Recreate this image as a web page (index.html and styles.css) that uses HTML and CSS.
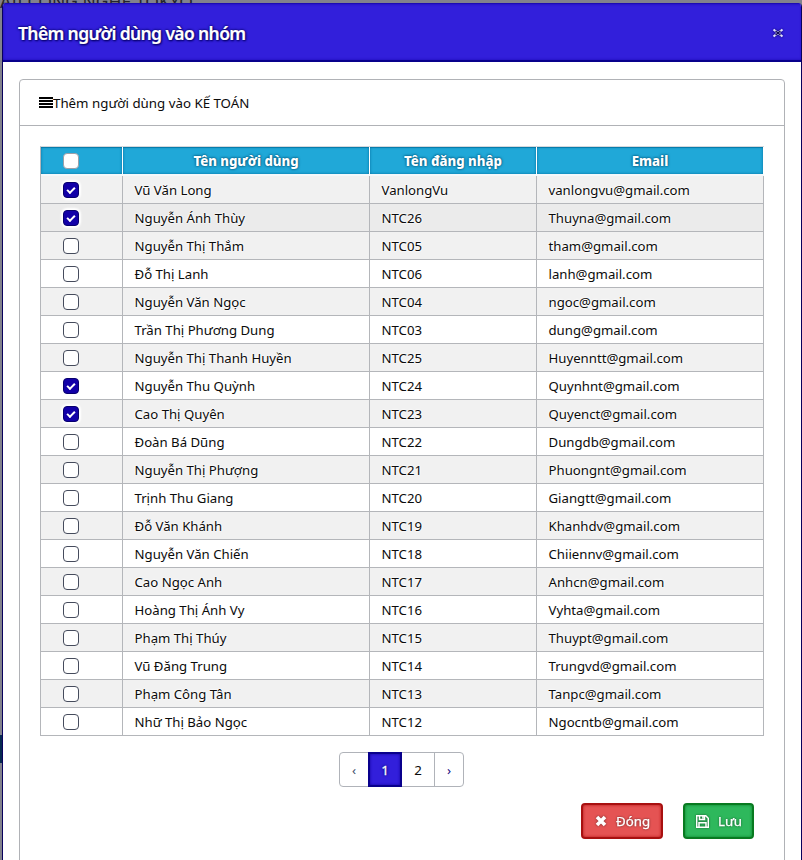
FILE: index.html
```html
<!DOCTYPE html>
<html lang="vi">
<head>
<meta charset="utf-8">
<title>Thêm người dùng vào nhóm</title>
<link rel="stylesheet" href="styles.css">
</head>
<body>
<div class="backdrop-title">AII CÔNG NGHỆ TOKYO</div>
<div class="backdrop-item"></div>
<div class="modal">
  <header class="modal-header">
    <h1><span>Thêm người dùng vào nhóm</span></h1>
    <svg class="close" width="12" height="10" viewBox="0 0 12 10"><path d="M1.500 1.500L10.500 8.500M10.500 1.500L1.500 8.500" fill="none" stroke="#e4e2ff" stroke-width="2.200"/><path d="M3.500 3L8.500 7M8.500 3L3.500 7" stroke="#080050" stroke-width="1.100"/></svg>
  </header>
  <section class="card">
    <div class="card-header"><svg width="14" height="11" viewBox="0 0 14 11"><path d="M0 1h14M0 4h14M0 7h14M0 10h14" stroke="#000" stroke-width="2"/></svg><span>Thêm người dùng vào KẾ TOÁN</span></div>
    <div class="card-body">
      <table>
        <colgroup><col class="c1"><col class="c2"><col class="c3"><col class="c4"></colgroup>
        <thead><tr><th class="pick"><i class="box"></i></th><th>Tên người dùng</th><th>Tên đăng nhập</th><th>Email</th></tr></thead>
        <tbody>
          <tr><td class="pick"><i class="box on"></i></td><td>Vũ Văn Long</td><td>VanlongVu</td><td>vanlongvu@gmail.com</td></tr>
          <tr class="hover"><td class="pick"><i class="box on"></i></td><td>Nguyễn Ánh Thùy</td><td>NTC26</td><td>Thuyna@gmail.com</td></tr>
          <tr><td class="pick"><i class="box"></i></td><td>Nguyễn Thị Thắm</td><td>NTC05</td><td>tham@gmail.com</td></tr>
          <tr><td class="pick"><i class="box"></i></td><td>Đỗ Thị Lanh</td><td>NTC06</td><td>lanh@gmail.com</td></tr>
          <tr><td class="pick"><i class="box"></i></td><td>Nguyễn Văn Ngọc</td><td>NTC04</td><td>ngoc@gmail.com</td></tr>
          <tr><td class="pick"><i class="box"></i></td><td>Trần Thị Phương Dung</td><td>NTC03</td><td>dung@gmail.com</td></tr>
          <tr><td class="pick"><i class="box"></i></td><td>Nguyễn Thị Thanh Huyền</td><td>NTC25</td><td>Huyenntt@gmail.com</td></tr>
          <tr><td class="pick"><i class="box on"></i></td><td>Nguyễn Thu Quỳnh</td><td>NTC24</td><td>Quynhnt@gmail.com</td></tr>
          <tr><td class="pick"><i class="box on"></i></td><td>Cao Thị Quyên</td><td>NTC23</td><td>Quyenct@gmail.com</td></tr>
          <tr><td class="pick"><i class="box"></i></td><td>Đoàn Bá Dũng</td><td>NTC22</td><td>Dungdb@gmail.com</td></tr>
          <tr><td class="pick"><i class="box"></i></td><td>Nguyễn Thị Phượng</td><td>NTC21</td><td>Phuongnt@gmail.com</td></tr>
          <tr><td class="pick"><i class="box"></i></td><td>Trịnh Thu Giang</td><td>NTC20</td><td>Giangtt@gmail.com</td></tr>
          <tr><td class="pick"><i class="box"></i></td><td>Đỗ Văn Khánh</td><td>NTC19</td><td>Khanhdv@gmail.com</td></tr>
          <tr><td class="pick"><i class="box"></i></td><td>Nguyễn Văn Chiến</td><td>NTC18</td><td>Chiiennv@gmail.com</td></tr>
          <tr><td class="pick"><i class="box"></i></td><td>Cao Ngọc Anh</td><td>NTC17</td><td>Anhcn@gmail.com</td></tr>
          <tr><td class="pick"><i class="box"></i></td><td>Hoàng Thị Ánh Vy</td><td>NTC16</td><td>Vyhta@gmail.com</td></tr>
          <tr><td class="pick"><i class="box"></i></td><td>Phạm Thị Thúy</td><td>NTC15</td><td>Thuypt@gmail.com</td></tr>
          <tr><td class="pick"><i class="box"></i></td><td>Vũ Đăng Trung</td><td>NTC14</td><td>Trungvd@gmail.com</td></tr>
          <tr><td class="pick"><i class="box"></i></td><td>Phạm Công Tân</td><td>NTC13</td><td>Tanpc@gmail.com</td></tr>
          <tr><td class="pick"><i class="box"></i></td><td>Nhữ Thị Bảo Ngọc</td><td>NTC12</td><td>Ngocntb@gmail.com</td></tr>
        </tbody>
      </table>
      <nav class="pager"><a class="prev">‹</a><a class="current">1</a><a class="two">2</a><a class="next">›</a></nav>
      <div class="actions">
        <button class="btn danger"><svg width="12" height="12" viewBox="0 0 12 12"><path d="M2 2L10 10M10 2L2 10" stroke="#fff" stroke-width="3.600"/></svg><span>Đóng</span></button>
        <button class="btn success"><svg width="13" height="13" viewBox="0 0 13 13" fill="none" stroke="#fff" stroke-width="1.500"><path d="M.7.7h9l2.600 2.600v9H.7zM3.500.7v3.800h5V.7M3 12.300V7.700h7v4.600"/><path d="M7 1v2.700" stroke-width="1.600"/></svg><span>Lưu</span></button>
      </div>
    </div>
  </section>
</div>
</body>
</html>
```
FILE: styles.css
```css
* { box-sizing: border-box; }
body {
  margin: 0;
  width: 802px;
  height: 860px;
  overflow: hidden;
  position: relative;
  padding: 3px 0 0 2px;
  background: #82828c;
  font: 13.3px/20px "Noto Sans", "Open Sans", sans-serif;
  color: #0b0b0b;
}
.backdrop-title {
  position: absolute;
  left: 0;
  top: -9px;
  font-size: 17.5px;
  line-height: 20px;
  white-space: nowrap;
  color: #25252b;
}
.backdrop-item {
  position: absolute;
  left: 0;
  top: 735px;
  width: 2px;
  height: 28px;
  background: #06294f;
}
.modal {
  position: relative;
  width: 800px;
  height: 857px;
  background: #fff;
  border: 1px solid #08005c;
  border-top: 0;
  border-bottom: 0;
  border-radius: 4px 4px 0 0;
  overflow: hidden;
}
.modal-header {
  height: 59px;
  margin: 0 -1px;
  padding: 2px 18px 0 15px;
  display: flex;
  align-items: center;
  justify-content: space-between;
  background: #321fdb;
  border: 1px solid #1c0bb4;
  border-width: 1px 0 2px 1px;
  border-bottom-color: #08008c;
  box-shadow: inset 0 0 3px #1b08b0;
}
h1 {
  margin: 0;
  font-size: 17.5px;
  line-height: 24px;
  font-weight: 600;
  letter-spacing: -0.62px;
  color: #fff;
  -webkit-text-stroke: 0.2px #fff;
  text-shadow: 0 0 3px #08006c, 0 0 2px #08006c, 1px 1px 2px #08006c;
}
.close { filter: drop-shadow(0 0 1px #08006c); }
.card {
  width: 766px;
  height: 800px;
  margin: 17px 0 0 16px;
  border: 1px solid #b0b2b6;
  border-radius: 4px;
}
.card-header {
  height: 46px;
  padding: 0 0 0 19px;
  display: flex;
  align-items: center;
  border-bottom: 1px solid #b0b2b6;
}
.card-body { padding: 20px; }
table {
  width: 724px;
  table-layout: fixed;
  border-collapse: separate;
  border-spacing: 0;
  border: 1px solid #d5d8dc;
  border-width: 1px 0 0 1px;
  border-left-color: #b4b6ba;
}
.c1 { width: 82px; }
.c2 { width: 247px; }
.c3 { width: 167px; }
.c4 { width: 227px; }
th, td {
  height: 28px;
  padding: 0 0 0 11.5px;
  border: 0 solid #b4b6ba;
  border-width: 0 1px 1px 0;
  line-height: 20px;
  text-align: left;
  white-space: nowrap;
}
td { font-size: 13.2px; }
th {
  height: 29px;
  padding: 0;
  text-align: center;
  font-size: 13.2px;
  font-weight: 800;
  color: #fff;
  background: #20a8d8;
  background-clip: padding-box;
  border-color: #fff;
  border-bottom: 2px solid #f4f8fa;
  box-shadow: inset 0 0 3px #03709f, inset 0 1px 0 #0a85b4;
  text-shadow: 0 0 3px #02597f, 0 0 2px #02597f;
}
tbody tr:nth-child(odd) { background: #f1f1f1; }
tbody tr.hover { background: #ebebeb; }
tbody td { text-shadow: 0 0 2px #fff, 0 0 2px #fff, 0 0 3px #fff; }
th.pick, td.pick { padding: 0 0 0 22px; text-align: left; }
.box {
  display: block;
  width: 16px;
  height: 16px;
  background: #fff;
  border: 1px solid #454b5c;
  border-radius: 4px;
}
th .box { border-color: #9b9fa8; }
.box.on {
  background: #1200a8;
  border-color: #08006e;
  box-shadow: 0 0 2px 2px #fff;
}
.box.on::after {
  content: "";
  display: block;
  box-sizing: border-box;
  width: 8px;
  height: 5px;
  margin: 4px 0 0 3px;
  border: solid #fff;
  border-width: 0 0 2px 2px;
  transform: rotate(-45deg);
}
.pager {
  display: flex;
  width: 125px;
  height: 35px;
  margin: 16px 0 0 299px;
  border: 1px solid #b0b3b9;
  border-radius: 4px;
}
.pager a {
  display: flex;
  align-items: center;
  justify-content: center;
}
.pager .prev { width: 28px; color: #44506a; }
.pager .current {
  width: 34px;
  margin: -1px 0;
  color: #fff;
  -webkit-text-stroke: 0.3px #fff;
  background: #321fdb;
  border: 2px solid #09008c;
  box-shadow: inset 0 0 3px #13009c;
  text-shadow: 0 0 3px #08006c, 0 0 2px #08006c;
}
.pager .two { width: 33px; border-right: 1px solid #b0b3b9; }
.pager .next { width: 28px; color: #150b80; }
.actions {
  display: flex;
  justify-content: flex-end;
  gap: 20px;
  margin: 16px 10px 0 0;
}
.btn {
  display: flex;
  align-items: center;
  justify-content: center;
  height: 36px;
  padding: 0 0 0 1px;
  border-radius: 4px;
  font: inherit;
  color: #fff;
  -webkit-text-stroke: 0.25px #fff;
}
.btn span, .btn svg { filter: drop-shadow(0 0 1px rgba(0, 0, 0, .5)); }
.btn svg { margin-right: 9px; }
.danger {
  width: 82px;
  background: #e55353;
  border: 2px solid #a81010;
  box-shadow: inset 0 0 3px #b41414;
}
.success {
  width: 71px;
  background: #2eb85c;
  border: 2px solid #087a20;
  box-shadow: inset 0 0 3px #08802a;
}
```
